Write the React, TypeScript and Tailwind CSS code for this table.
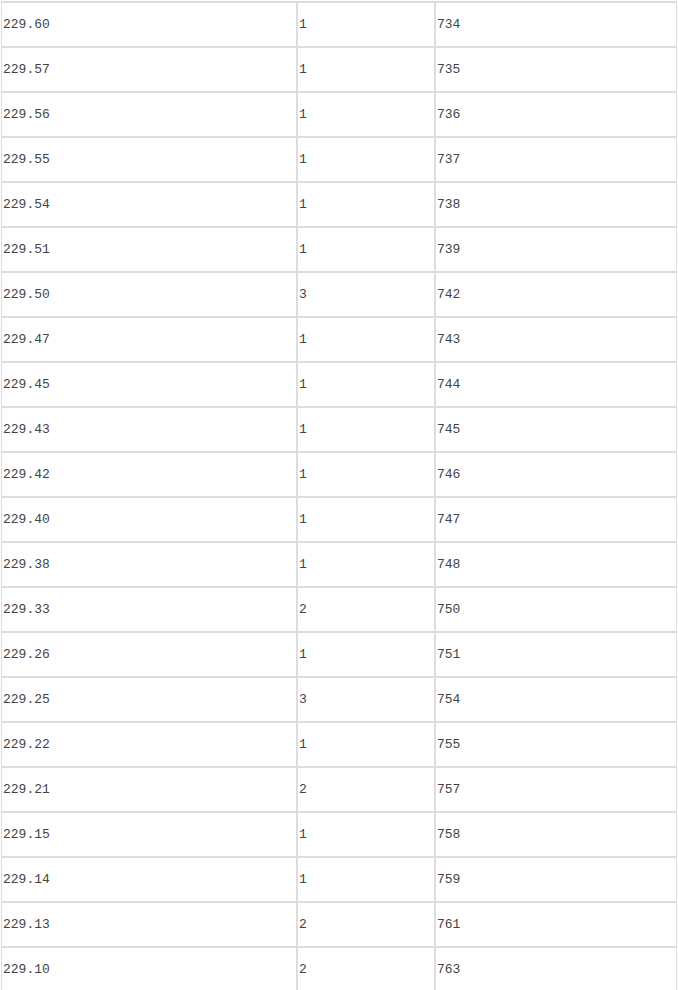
const rows: [string, string, string][] = [
  ['229.60', '1', '734'],
  ['229.57', '1', '735'],
  ['229.56', '1', '736'],
  ['229.55', '1', '737'],
  ['229.54', '1', '738'],
  ['229.51', '1', '739'],
  ['229.50', '3', '742'],
  ['229.47', '1', '743'],
  ['229.45', '1', '744'],
  ['229.43', '1', '745'],
  ['229.42', '1', '746'],
  ['229.40', '1', '747'],
  ['229.38', '1', '748'],
  ['229.33', '2', '750'],
  ['229.26', '1', '751'],
  ['229.25', '3', '754'],
  ['229.22', '1', '755'],
  ['229.21', '2', '757'],
  ['229.15', '1', '758'],
  ['229.14', '1', '759'],
  ['229.13', '2', '761'],
  ['229.10', '2', '763'],
]

const cell =
  'flex h-[45px] items-center border border-[#dddddd] pl-[1px] text-[13px] text-[#444]'

export default function App() {
  return (
    <div className="h-[990px] w-[678px] overflow-hidden bg-white pt-[1px] pl-[1px] font-['Liberation_Mono',monospace]">
      <div className="w-[676px] border-t border-[#dddddd]">
        {rows.map(([price, qty, total]) => (
          <div key={price} className="grid grid-cols-[296px_138px_242px]">
            <div className={cell}>{price}</div>
            <div className={cell}>{qty}</div>
            <div className={cell}>{total}</div>
          </div>
        ))}
      </div>
    </div>
  )
}
